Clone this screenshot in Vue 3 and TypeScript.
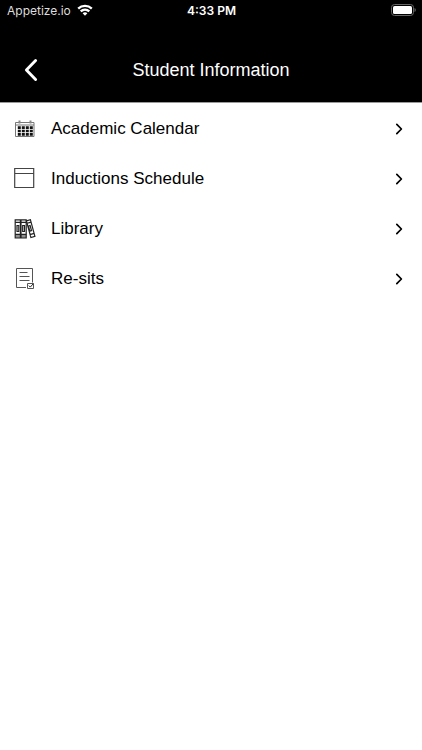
<script setup lang="ts">
type IconName = 'calendar' | 'window' | 'books' | 'form'

interface MenuItem {
  label: string
  icon: IconName
}

const items: MenuItem[] = [
  { label: 'Academic Calendar', icon: 'calendar' },
  { label: 'Inductions Schedule', icon: 'window' },
  { label: 'Library', icon: 'books' },
  { label: 'Re-sits', icon: 'form' },
]
</script>

<template>
  <div class="screen">
    <header class="header">
      <div class="status">
        <div class="carrier">
          <span>Appetize.io</span>
          <svg class="wifi" width="16" height="12" viewBox="0 0 16 12" aria-hidden="true">
            <g fill="none" stroke="#fff" stroke-width="2.3">
              <path d="M1.2 4.6C5 .9 11 .9 14.8 4.6" />
              <path d="M3.7 7.4c2.5-2.3 6.1-2.3 8.6 0" />
            </g>
            <path d="M8 11.7 5.6 9.2c1.4-1.2 3.4-1.2 4.8 0z" fill="#fff" />
          </svg>
        </div>
        <span class="time">4:33 PM</span>
        <svg class="battery" width="25" height="12" viewBox="0 0 25 12" aria-hidden="true">
          <rect x=".5" y=".5" width="22" height="11" rx="3" fill="none" stroke="#666" />
          <rect x="2" y="2" width="19" height="8" rx="1.6" fill="#fff" />
          <path d="M23.6 4v4c1.4-.5 1.4-3.5 0-4z" fill="#888" />
        </svg>
      </div>
      <div class="titlebar">
        <button class="back" type="button" aria-label="Back">
          <svg width="14" height="24" viewBox="0 0 14 24" aria-hidden="true">
            <path d="M11.6 2.6 2.4 12l9.2 9.4" fill="none" stroke="#fff" stroke-width="2.9" stroke-linecap="round" stroke-linejoin="round" />
          </svg>
        </button>
        <h1 class="title">Student Information</h1>
      </div>
    </header>

    <nav class="menu">
      <a v-for="item in items" :key="item.label" class="row" href="#">
        <svg class="icon" width="22" height="24" viewBox="0 0 22 24" fill="none" aria-hidden="true">
          <g v-if="item.icon === 'calendar'">
            <path d="M1.5 5.5h18.5v14h-18.5zM1.5 8h18.5" stroke="#777" />
            <path d="M5.5 3.5v3M16.5 3.5v3" stroke="#888" stroke-width="2" />
            <path d="M3.8 10.6h15.2M3.8 14h15.2M3.8 17.4h15.2" stroke="#111" stroke-width="2.6" stroke-dasharray="3 1" />
          </g>
          <g v-else-if="item.icon === 'window'" stroke="#444" stroke-width="1.2">
            <path d="M.7 1.5h19v19H.7zM.7 6.5h19" />
          </g>
          <g v-else-if="item.icon === 'books'" stroke="#222" stroke-width="1.2">
            <path d="M1.2 2.8h5.2v18H1.2zM7 2.8h5.2v18H7z" />
            <path d="M1.2 5.3h11M1.2 17.4h11M1.2 19h11" />
            <path d="M3 8.5h1.8v6H3zM8.7 8.5h1.8v6H8.7z" />
            <path d="m12.4 3.8 4-1.1 4.5 16.7-4 1.2zM13.1 6.3l4-1.2M15.8 17.6l4.4-1.3M14.4 9l1.7-.5 1.4 5.2-1.7.5z" />
          </g>
          <g v-else stroke="#555">
            <path d="M12 20.5H2.5v-19h16v14" />
            <path d="M5.5 5.5h8M5.5 9.5h10M5.5 13.5h10" />
            <path d="M13.5 16.5h6v5h-6z" />
            <path d="m14.8 18.6 1.5 1.5 3-3.4" stroke="#222" />
          </g>
        </svg>
        <span class="label">{{ item.label }}</span>
        <svg class="chevron" width="8" height="12" viewBox="0 0 8 12" aria-hidden="true">
          <path d="M1.8 1.3 6.4 6l-4.6 4.7" fill="none" stroke="#000" stroke-width="1.7" stroke-linecap="round" stroke-linejoin="round" />
        </svg>
      </a>
    </nav>
  </div>
</template>

<style>
body {
  margin: 0;
  background: #fff;
}
</style>

<style scoped>
.screen {
  min-height: 100vh;
  background: #fff;
  color: #000;
  font-family: "Liberation Sans", Arial, sans-serif;
}

.header {
  background: #000;
  color: #fff;
  border-bottom: 1px solid #999;
}

.status {
  display: grid;
  grid-template-columns: 1fr auto 1fr;
  align-items: center;
  height: 20px;
  padding: 0 6px 0 7px;
  font-family: Inter, sans-serif;
  font-size: 12px;
}

.carrier {
  display: flex;
  align-items: center;
  gap: 6px;
  color: #ddd;
}

.time {
  font-weight: 600;
}

.battery {
  justify-self: end;
}

.titlebar {
  display: grid;
  grid-template-columns: 48px 1fr 48px;
  align-items: center;
  height: 64px;
  padding-top: 18px;
}

.back {
  display: flex;
  justify-content: flex-end;
  padding: 10px;
  border: 0;
  background: none;
}

.title {
  margin: 0;
  font-size: 18px;
  font-weight: 400;
  line-height: 24px;
  text-align: center;
}

.menu {
  padding-top: 1px;
}

.row {
  display: flex;
  align-items: center;
  height: 50px;
  padding: 0 19px 0 14px;
  color: inherit;
  text-decoration: none;
}

.icon {
  flex: none;
}

.label {
  flex: 1;
  margin-left: 15px;
  font-size: 17px;
  line-height: 24px;
}

.chevron {
  flex: none;
}
</style>
